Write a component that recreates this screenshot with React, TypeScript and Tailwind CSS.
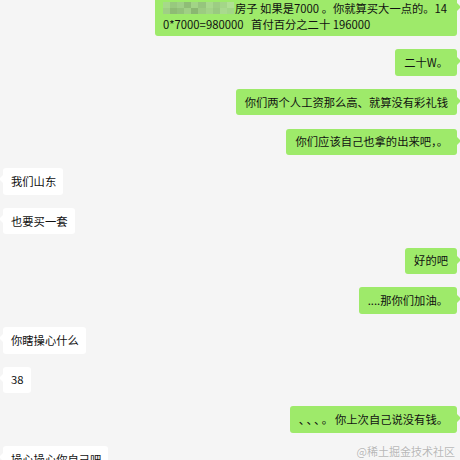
import React from 'react';

type Msg = { side: 'left' | 'right'; text: React.ReactNode };

const messages: Msg[] = [
  { side: 'right', text: '二十W。' },
  { side: 'right', text: '你们两个人工资那么高、就算没有彩礼钱' },
  { side: 'right', text: '你们应该自己也拿的出来吧，。' },
  { side: 'left', text: '我们山东' },
  { side: 'left', text: '也要买一套' },
  { side: 'right', text: '好的吧' },
  { side: 'right', text: '....那你们加油。' },
  { side: 'left', text: '你瞎操心什么' },
  { side: 'left', text: '38' },
  {
    side: 'right',
    text: (
      <>
        <span className="tracking-[2px]">、、、。</span>你上次自己说没有钱。
      </>
    ),
  },
  { side: 'left', text: '操心操心你自己吧' },
];

const mosaic = [
  ['#a6d98a', '#98c97e', '#9fcf86', '#8fbd76', '#a2d486', '#96c57d', '#a8d98c', '#9dcd83', '#a4d688', '#b0e094'],
  ['#9fcf85', '#8ebb74', '#93c27a', '#a0d085', '#8ab771', '#9ccb81', '#a3d487', '#99c980', '#a9da8e', '#a2d787'],
];

function Bubble({ msg }: { msg: Msg }) {
  const right = msg.side === 'right';
  return (
    <div className={`flex ${right ? 'justify-end' : 'justify-start'}`}>
      <div
        className={`relative h-[26.5px] flex items-center rounded-[3px] text-[11.3px] text-[#111] whitespace-nowrap ${
          right ? 'bg-[#9eea6a] px-[9px]' : 'bg-white pl-[8px] pr-[7px]'
        }`}
      >
        {msg.text}
        {right ? (
          <span className="absolute top-[8px] -right-[4px] w-0 h-0 border-y-[4px] border-y-transparent border-l-[4px] border-l-[#9eea6a]" />
        ) : (
          <span className="absolute top-[7px] -left-[4px] w-0 h-0 border-y-[4px] border-y-transparent border-r-[4px] border-r-white" />
        )}
      </div>
    </div>
  );
}

export default function App() {
  return (
    <div
      className="relative w-[460px] h-[460px] overflow-hidden bg-[#f5f5f5]"
      style={{ fontFamily: '"Noto Sans CJK SC", "Noto Sans", sans-serif' }}
    >
      <div className="flex flex-col gap-[13.2px] px-[3px] mt-[-5px]">
        {/* first long message, top cut off */}
        <div className="flex justify-end">
          <div className="relative w-[302px] bg-[#9eea6a] rounded-[3px] pl-2 pr-1 pt-[5px] pb-[4px] text-[11.3px] leading-[16px] text-[#111] whitespace-pre">
            <div className="flex items-center">
              <span className="inline-flex flex-col w-[71px] h-[12px] mr-[1px]">
                {mosaic.map((row, i) => (
                  <span key={i} className="flex flex-1">
                    {row.map((c, j) => (
                      <span key={j} className="flex-1" style={{ background: c }} />
                    ))}
                  </span>
                ))}
              </span>
              <span>房子 如果是7000 。你就算买大一点的。14</span>
            </div>
            <div>0*7000=980000   首付百分之二十 196000</div>
            <span className="absolute top-[8px] -right-[4px] w-0 h-0 border-y-[4px] border-y-transparent border-l-[4px] border-l-[#9eea6a]" />
          </div>
        </div>
        {messages.map((m, i) => (
          <Bubble key={i} msg={m} />
        ))}
      </div>
      <div className="absolute right-[5px] bottom-[1px] text-[11px] text-[#b8b8b8] [text-shadow:0_0_2px_#fff]">
        @稀土掘金技术社区
      </div>
    </div>
  );
}
